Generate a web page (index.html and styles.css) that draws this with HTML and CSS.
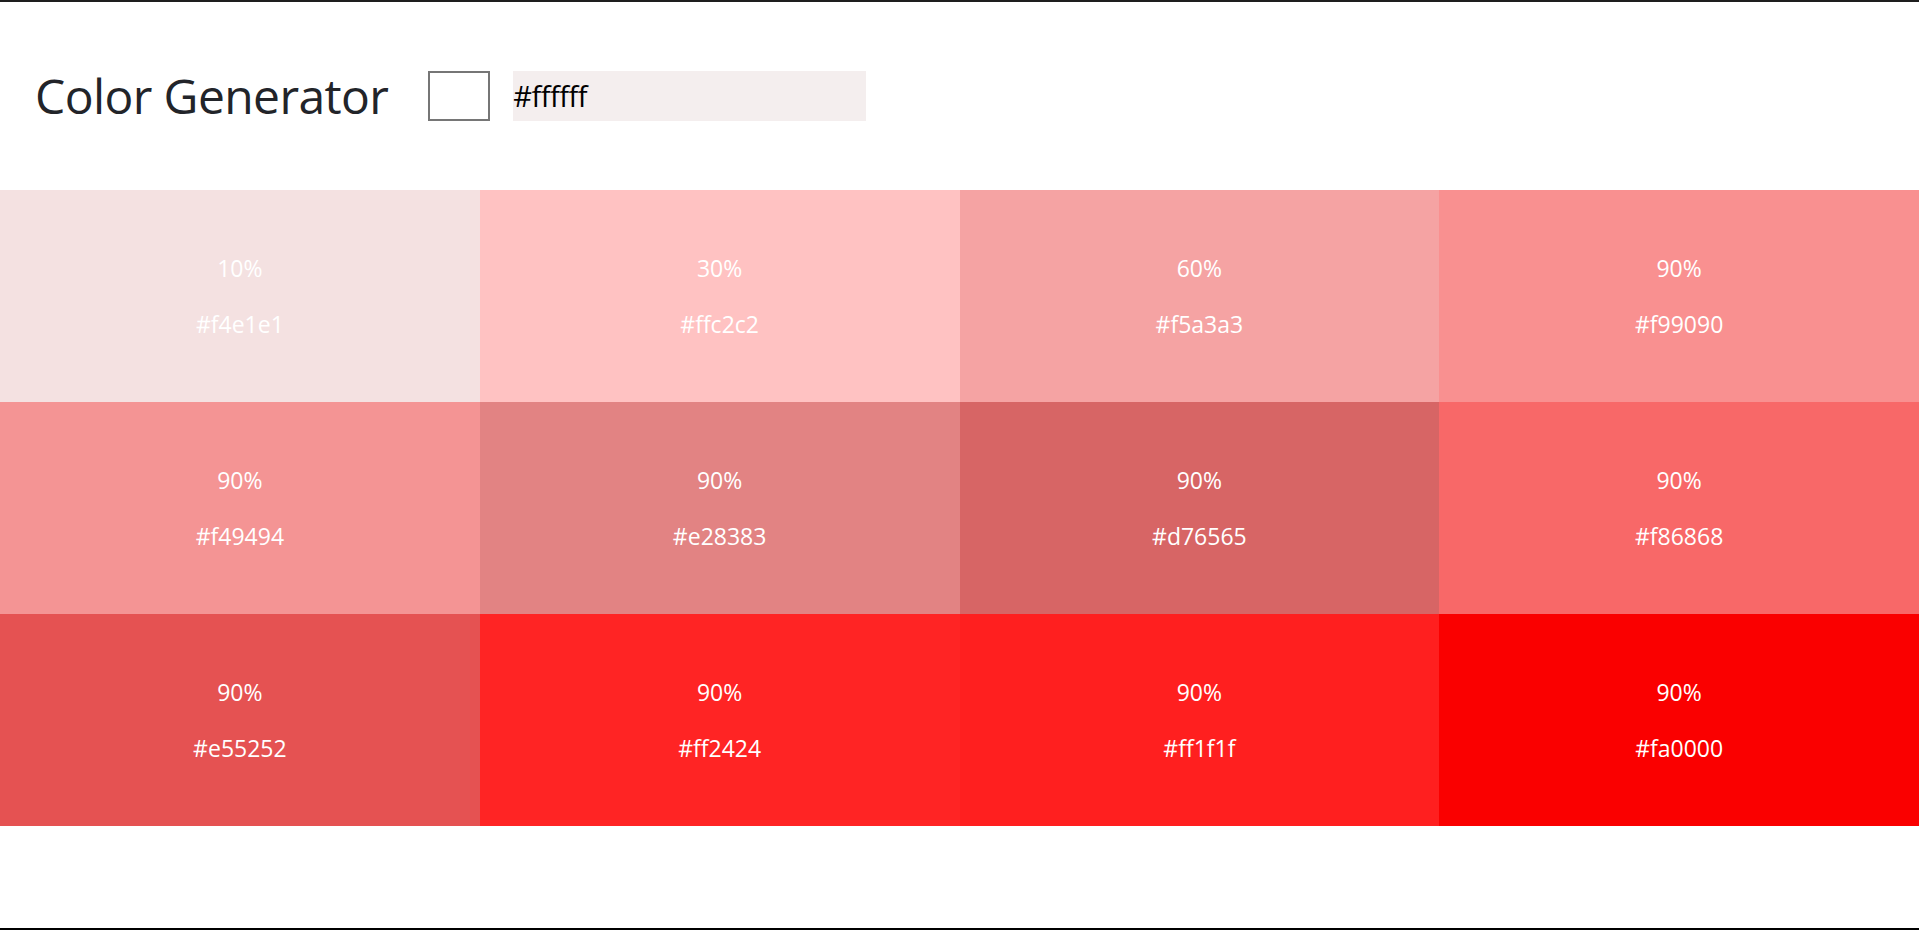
FILE: index.html
```html
<!DOCTYPE html>
<html lang="en">
<head>
<meta charset="utf-8">
<title>Color Generator</title>
<link rel="stylesheet" href="styles.css">
</head>
<body>
<div class="page">
  <header class="header">
    <h1 class="title">Color Generator</h1>
    <div class="swatch"></div>
    <div class="hex-input">#ffffff</div>
  </header>
  <main class="grid">
    <div class="cell" style="background:#f4e1e1"><span>10%</span><span>#f4e1e1</span></div>
    <div class="cell" style="background:#ffc2c2"><span>30%</span><span>#ffc2c2</span></div>
    <div class="cell" style="background:#f5a3a3"><span>60%</span><span>#f5a3a3</span></div>
    <div class="cell" style="background:#f99090"><span>90%</span><span>#f99090</span></div>
    <div class="cell" style="background:#f49494"><span>90%</span><span>#f49494</span></div>
    <div class="cell" style="background:#e28383"><span>90%</span><span>#e28383</span></div>
    <div class="cell" style="background:#d76565"><span>90%</span><span>#d76565</span></div>
    <div class="cell" style="background:#f86868"><span>90%</span><span>#f86868</span></div>
    <div class="cell" style="background:#e55252"><span>90%</span><span>#e55252</span></div>
    <div class="cell" style="background:#ff2424"><span>90%</span><span>#ff2424</span></div>
    <div class="cell" style="background:#ff1f1f"><span>90%</span><span>#ff1f1f</span></div>
    <div class="cell" style="background:#fa0000"><span>90%</span><span>#fa0000</span></div>
  </main>
</div>
</body>
</html>
```

FILE: styles.css
```css
html, body {
  margin: 0;
  padding: 0;
  background: #ffffff;
}

body {
  font-family: "Open Sans", "Noto Sans", sans-serif;
  color: #212529;
}

.page {
  box-sizing: border-box;
  height: 930px;
  border-top: 2px solid #1e1e1e;
  border-bottom: 2px solid #000000;
  overflow: hidden;
}

.header {
  display: flex;
  align-items: center;
  height: 188px;
  padding-left: 35px;
  box-sizing: border-box;
}

.title {
  margin: 0;
  font-size: 48px;
  font-weight: 400;
  line-height: 50px;
  color: #222429;
  letter-spacing: -0.6px;
}

.swatch {
  margin-left: 40px;
  width: 62px;
  height: 50px;
  box-sizing: border-box;
  border: 2px solid #767676;
  background: #ffffff;
}

.hex-input {
  margin-left: 23px;
  width: 353px;
  height: 50px;
  background: #f4eeee;
  font-size: 29px;
  line-height: 50px;
  color: #000000;
  letter-spacing: -0.5px;
}

.grid {
  display: grid;
  grid-template-columns: repeat(4, 1fr);
  grid-auto-rows: 212px;
}

.cell {
  display: flex;
  flex-direction: column;
  align-items: center;
  justify-content: center;
  gap: 24px;
  color: #ffffff;
  font-size: 23px;
  line-height: 32px;
}
```
